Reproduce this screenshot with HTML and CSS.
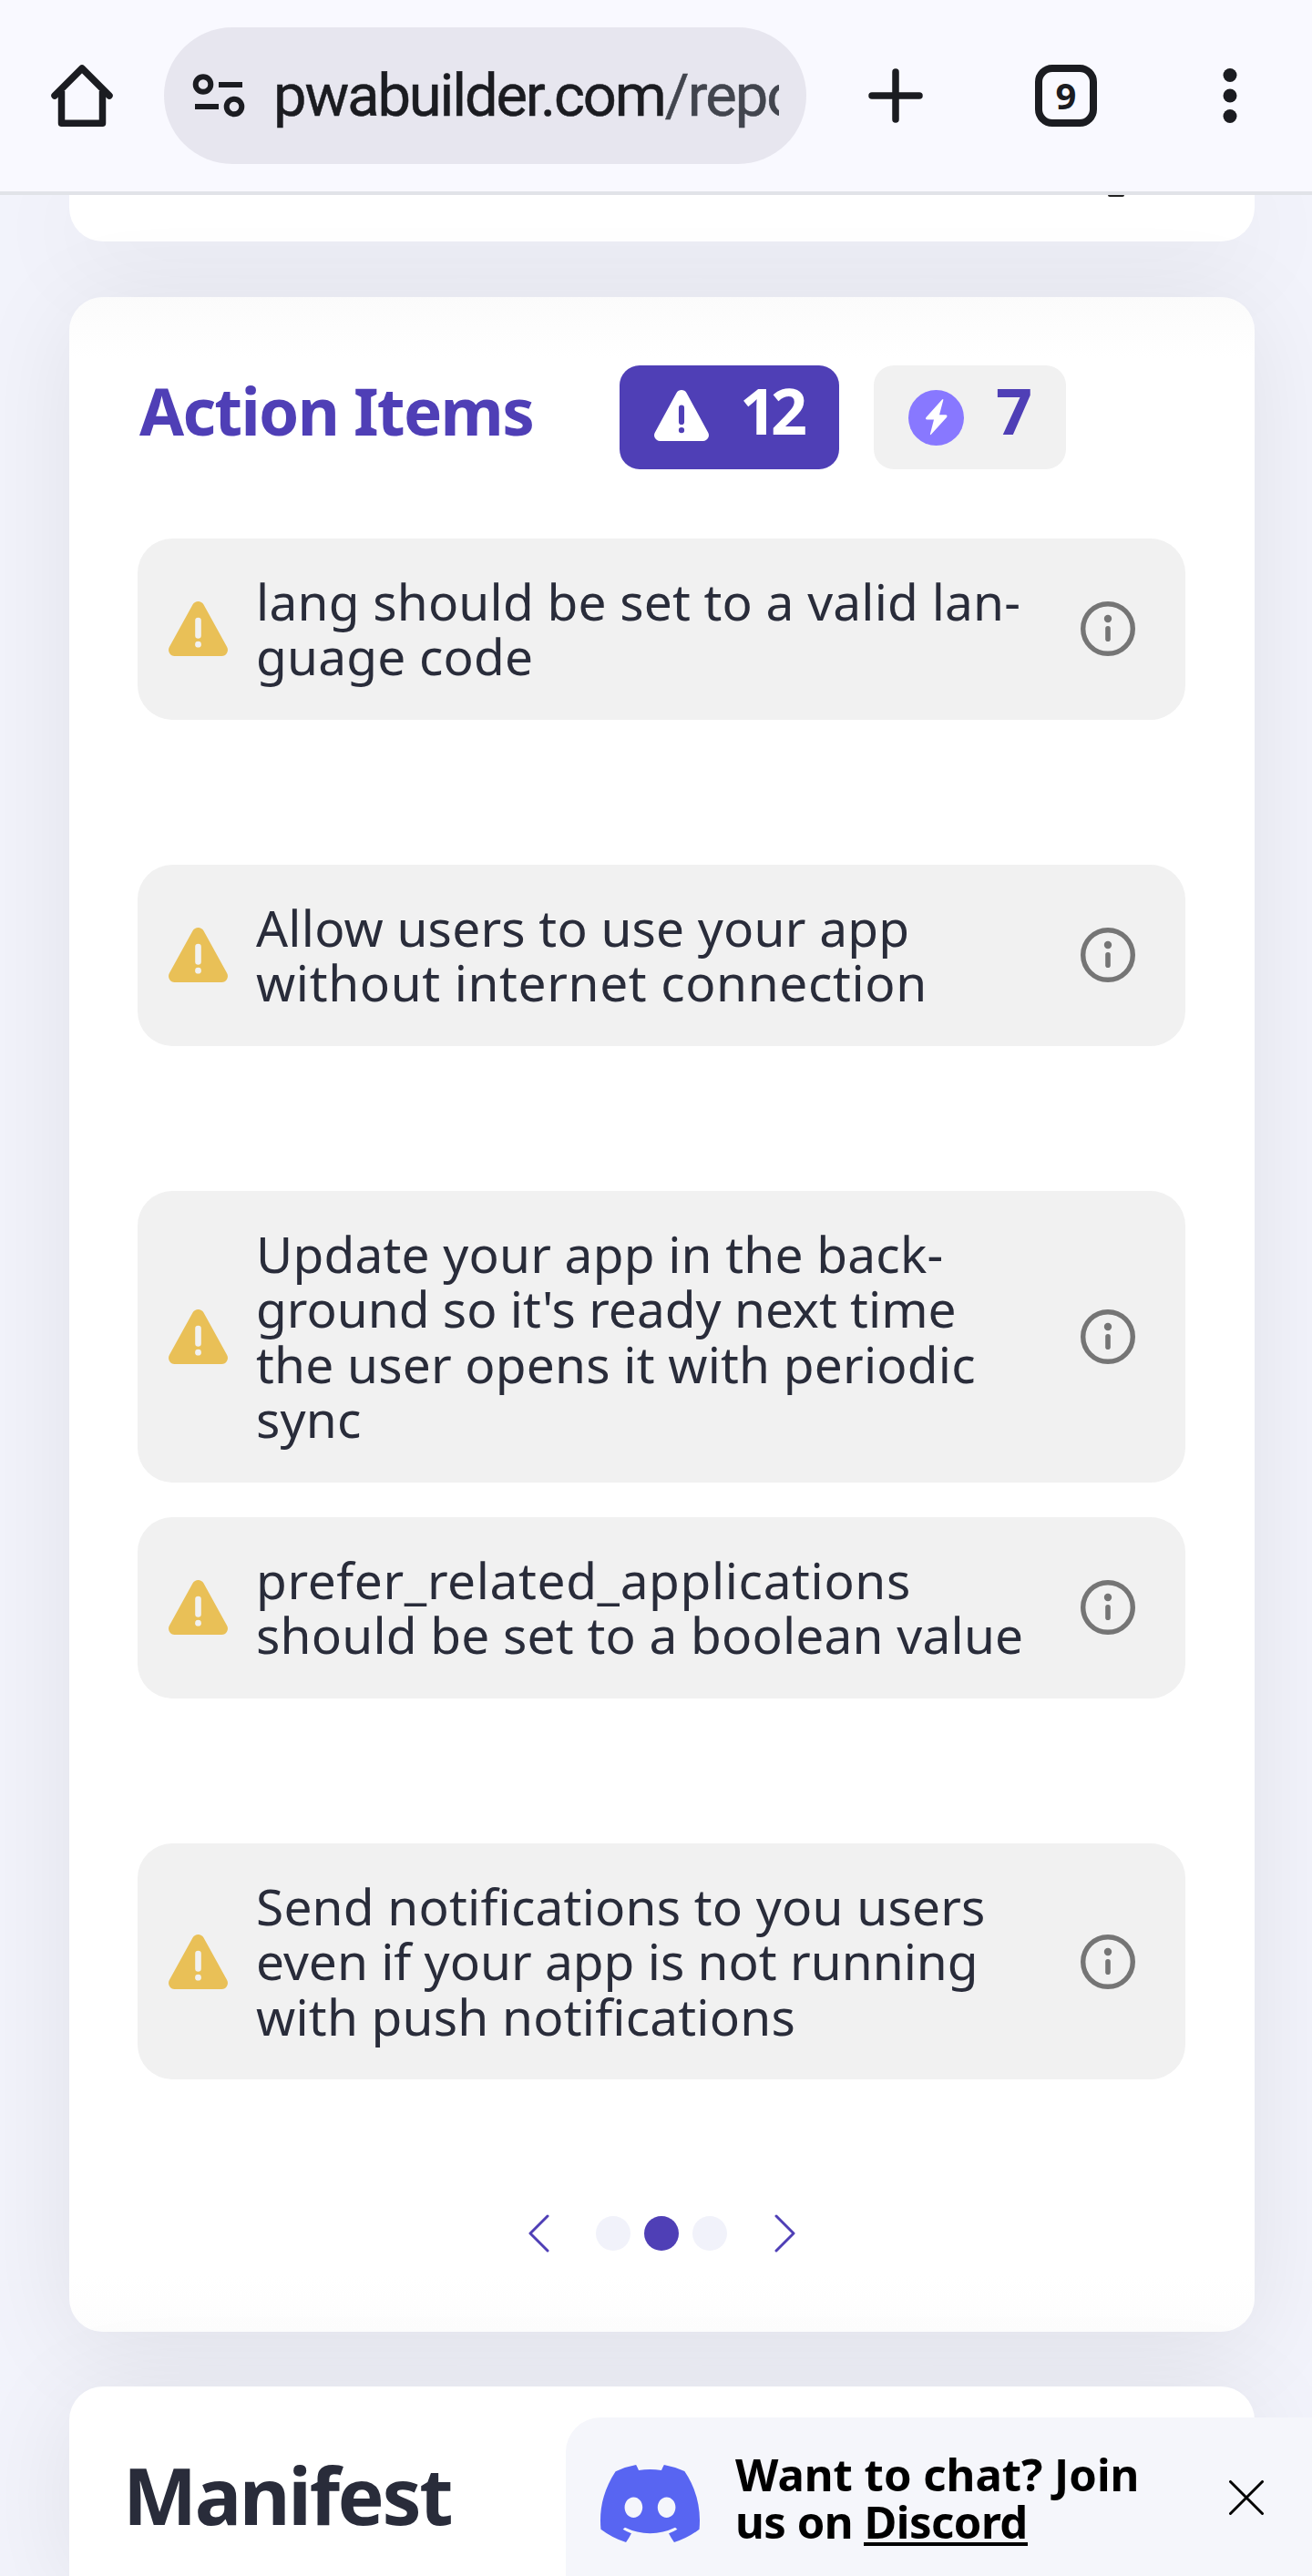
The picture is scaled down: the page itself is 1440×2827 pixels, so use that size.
FILE: index.html
```html
<!DOCTYPE html>
<html lang="en">
<head>
<meta charset="utf-8">
<title>PWABuilder report</title>
<link rel="stylesheet" href="styles.css">
</head>
<body>
<svg class="sprite" width="0" height="0">
  <symbol id="warn" viewBox="0 0 65 60">
    <path fill-rule="evenodd" d="M26.5 3.4a7 7 0 0 1 12 0L64 49.8a6.8 6.8 0 0 1-6 10.2H7a6.8 6.8 0 0 1-6-10.2ZM29.2 21v16.500a3.300 3.300 0 0 0 6.600 0V21a3.300 3.300 0 0 0-6.600 0ZM32.500 43.800a3.400 3.400 0 1 0 0 6.800a3.400 3.400 0 1 0 0-6.800Z"/>
  </symbol>
  <symbol id="info" viewBox="0 0 60 60">
    <circle cx="30" cy="30" r="27.300" fill="none" stroke="currentColor" stroke-width="5.400"/>
    <circle cx="30" cy="19" r="4.200"/>
    <rect x="27.200" y="27" width="5.600" height="17" rx="2.800"/>
  </symbol>
</svg>

<header class="browser">
  <svg class="home" width="76" height="76" viewBox="0 0 76 76" fill="none" stroke="currentColor" stroke-width="7.500" stroke-linejoin="round" stroke-linecap="round"><path d="M8 38 38 8l30 30"/><path d="M15.500 33v35.300h45V33" stroke-linecap="butt"/></svg>
  <div class="address">
    <svg class="tune" width="58" height="48" viewBox="0 0 58 48" fill="none" stroke="currentColor" stroke-width="6"><circle cx="12" cy="11.500" r="8.300"/><path d="M29 12h26M3 36h26"/><circle cx="46" cy="36" r="8.300"/></svg>
    <div class="url">pwabuilder.com<span>/repo</span></div>
  </div>
  <svg class="plus" width="60" height="60" viewBox="0 0 60 60" fill="none" stroke="currentColor" stroke-width="7.500" stroke-linecap="round"><path d="M30 4v52M4 30h52"/></svg>
  <div class="tabs">9</div>
  <svg class="more" width="16" height="60" viewBox="0 0 16 60"><circle cx="8" cy="7.500" r="7.500"/><circle cx="8" cy="30" r="7.500"/><circle cx="8" cy="52.500" r="7.500"/></svg>
</header>

<main class="page">
  <section class="card card-previous"><i class="descender"></i></section>

  <section class="card actions">
    <div class="actions-head">
      <h2>Action Items</h2>
      <div class="badge badge-on"><svg width="60" height="56" viewBox="0 0 65 60" preserveAspectRatio="none"><use href="#warn" width="65" height="60"/></svg><b>12</b></div>
      <div class="badge"><svg width="61" height="61" viewBox="0 0 61 61"><circle cx="30.500" cy="30.500" r="30.500" fill="#8878ff"/><path d="M37 10.500 19.500 30q-1.500 2.500 1.500 2.500h7L24 48q-.4 2 1.200.5L42 30q1.500-2.700-1.500-2.700H34L38.300 11q.2-1.800-1.300-.5Z" fill="#fff"/></svg><b>7</b></div>
    </div>
    <ul class="items">
      <li><div class="item"><svg class="warn"><use href="#warn"/></svg><p>lang should be set to a valid lan&shy;guage code</p><svg class="info"><use href="#info"/></svg></div></li>
      <li><div class="item"><svg class="warn"><use href="#warn"/></svg><p>Allow users to use your app <span class="loose">without internet connection</span></p><svg class="info"><use href="#info"/></svg></div></li>
      <li><div class="item"><svg class="warn"><use href="#warn"/></svg><p>Update your app in the back&shy;<span class="tight">ground so it's ready next time</span> the user opens it with periodic sync</p><svg class="info"><use href="#info"/></svg></div></li>
      <li><div class="item"><svg class="warn"><use href="#warn"/></svg><p><span class="loose">prefer_related_applications</span> should be set to a boolean value</p><svg class="info"><use href="#info"/></svg></div></li>
      <li><div class="item"><svg class="warn"><use href="#warn"/></svg><p>Send notifications to you users <span class="tight">even if your app is not running</span> with push notifications</p><svg class="info"><use href="#info"/></svg></div></li>
    </ul>
    <nav class="pager">
      <svg width="24" height="42" viewBox="0 0 24 42"><path d="M22 2 3 21l19 19"/></svg>
      <div class="dots"><i></i><i class="on"></i><i></i></div>
      <svg width="24" height="42" viewBox="0 0 24 42"><path d="m2 2 19 19L2 40"/></svg>
    </nav>
  </section>

  <section class="card manifest"><h1>Manifest</h1></section>
</main>

<aside class="chat">
  <svg class="discord" viewBox="0 0 127.140 96.360" preserveAspectRatio="none"><path d="M107.700,8.070A105.150,105.150,0,0,0,81.470,0a72.060,72.060,0,0,0-3.360,6.830A97.680,97.680,0,0,0,49,6.830,72.370,72.370,0,0,0,45.640,0,105.890,105.890,0,0,0,19.390,8.090C2.790,32.650-1.710,56.600.54,80.210h0A105.730,105.730,0,0,0,32.710,96.360,77.700,77.700,0,0,0,39.600,85.250a68.420,68.420,0,0,1-10.850-5.180c.91-.66,1.800-1.340,2.660-2a75.570,75.570,0,0,0,64.320,0c.87.71,1.760,1.390,2.660,2a68.680,68.680,0,0,1-10.870,5.190,77,77,0,0,0,6.890,11.100A105.250,105.250,0,0,0,126.600,80.220h0C129.240,52.840,122.090,29.110,107.700,8.070ZM42.450,65.690C36.180,65.690,31,60,31,53s5-12.740,11.430-12.740S54,46,53.890,53,48.840,65.690,42.450,65.690Zm42.240,0C78.410,65.690,73.250,60,73.250,53s5-12.740,11.440-12.740S96.230,46,96.120,53,91.080,65.690,84.690,65.690Z"/></svg>
  <p>Want to chat? Join<br><span>us on <a>Discord</a></span></p>
  <svg class="close" width="38" height="38" viewBox="0 0 38 38"><path d="m1.500 1.500 35 35m0-35-35 35"/></svg>
</aside>
</body>
</html>
```
FILE: styles.css
```css
* { box-sizing: border-box; margin: 0; padding: 0; }

body {
  position: relative;
  height: 2827px;
  overflow: hidden;
  background: #f2f3fb;
  font-family: "Noto Sans", sans-serif;
  color: #292c3a;
}

svg { display: block; flex: none; fill: currentColor; }
.sprite { position: absolute; }

/* Browser bar */
.browser {
  position: relative;
  z-index: 2;
  display: flex;
  align-items: center;
  height: 214px;
  padding-left: 52px;
  background: #f9f9ff;
  border-bottom: 4px solid #e1e3e8;
  color: #1b1c21;
}
.browser svg[fill="none"] { fill: none; }
.address {
  display: flex;
  align-items: center;
  width: 705px;
  height: 150px;
  margin-left: 52px;
  padding-left: 31px;
  border-radius: 75px;
  background: #e7e6ef;
}
.url {
  flex: none;
  width: 555px;
  margin-left: 31px;
  overflow: hidden;
  white-space: nowrap;
  font: 65px/90px Roboto, sans-serif;
  letter-spacing: -2.1px;
  -webkit-text-stroke: .5px;
}
.url span { color: #42454e; letter-spacing: -1.9px; }
.plus { margin-left: 68px; }
.tabs {
  width: 68px;
  height: 68px;
  margin-left: 123px;
  border: 8px solid;
  border-radius: 19px;
  text-align: center;
  font: 700 40px/52px "Open Sans", sans-serif;
}
.more { margin-left: 138px; }

/* Cards */
.page { padding: 0 63px 0 76px; }
.card {
  border-radius: 37px;
  background: #fff;
  box-shadow: 0 15px 114px rgba(0, 0, 0, .08);
}
.card-previous {
  height: 51px;
  border-radius: 0 0 37px 37px;
  padding-left: 1140px;
}
.descender {
  display: block;
  width: 18px;
  height: 2px;
  border-radius: 0 0 9px 9px;
  background: #222;
}
.actions {
  height: 2233px;
  margin-top: 61px;
  padding: 75px 75px 0;
  background: linear-gradient(#fbfbfb, #fff 68px, #fff 2170px, #fdfdfd);
}
.actions-head { display: flex; align-items: flex-start; height: 114px; }
h2 {
  width: 529px;
  padding-left: 2px;
  color: #4f3fb6;
  font-size: 71px;
  line-height: 99px;
  letter-spacing: -1.7px;
  white-space: nowrap;
}
.badge {
  display: flex;
  width: 211px;
  height: 114px;
  padding: 27px 0 0 38px;
  border-radius: 22px;
  background: #f1f1f1;
  color: #4f3fb6;
}
.badge-on {
  width: 241px;
  margin-right: 38px;
  background: #4f3fb6;
  color: #fff;
}
.badge b {
  margin: -27px 0 0 35px;
  font-size: 70px;
  line-height: 98px;
  letter-spacing: -6px;
}
.badge-on b { margin-left: 34px; }

.items { margin-top: 76px; list-style: none; }
.items li { height: 358px; }
.item {
  display: flex;
  align-items: center;
  width: 1150px;
  padding: 38.700px 0 38.700px 34px;
  border-radius: 38px;
  background: #f1f1f1;
}
.warn { width: 65px; height: 60px; color: #e9c057; }
.item p {
  width: 852px;
  margin-left: 31px;
  font-size: 55px;
  line-height: 60.600px;
  letter-spacing: .2px;
  hyphens: manual;
}
.item .loose { letter-spacing: .62px; }
.item .tight { letter-spacing: 0; }
.info { width: 60px; height: 60px; margin-left: 53px; color: #757575; }

.pager { display: flex; align-items: center; margin: 49px 0 0 428px; }
.pager svg { fill: none; stroke: #4f3fb6; stroke-width: 3; stroke-linecap: round; stroke-linejoin: round; }
.dots { display: flex; gap: 15px; margin: 0 52px 0 51px; }
.dots i { width: 38px; height: 38px; border-radius: 50%; background: #f1f2fa; }
.dots .on { background: #4f3fb6; }

.manifest {
  height: 208px;
  margin-top: 60px;
  padding: 61px 0 0 59px;
  border-radius: 37px 37px 0 0;
}
h1 { width: fit-content; font-size: 86px; line-height: 116px; letter-spacing: -2.4px; }

/* Chat invitation pinned to the bottom of the window */
.chat {
  position: absolute;
  z-index: 2;
  right: 0;
  bottom: 0;
  display: flex;
  width: 819px;
  height: 174px;
  padding: 36px 0 0 38px;
  border-radius: 38px 0 0 0;
  background: #f5f6fb;
  color: #000;
}
.discord { width: 109px; height: 85px; margin-top: 16px; color: #5865f2; }
.chat p {
  width: 500px;
  margin-left: 39px;
  font-size: 49px;
  font-weight: 700;
  line-height: 52px;
  white-space: nowrap;
}
.chat span { letter-spacing: -.5px; }
.chat a { display: inline-block; height: 53px; border-bottom: 4px solid; }
.close { margin: 33px 0 0 42px; stroke: #000; stroke-width: 3; stroke-linecap: round; }
```
